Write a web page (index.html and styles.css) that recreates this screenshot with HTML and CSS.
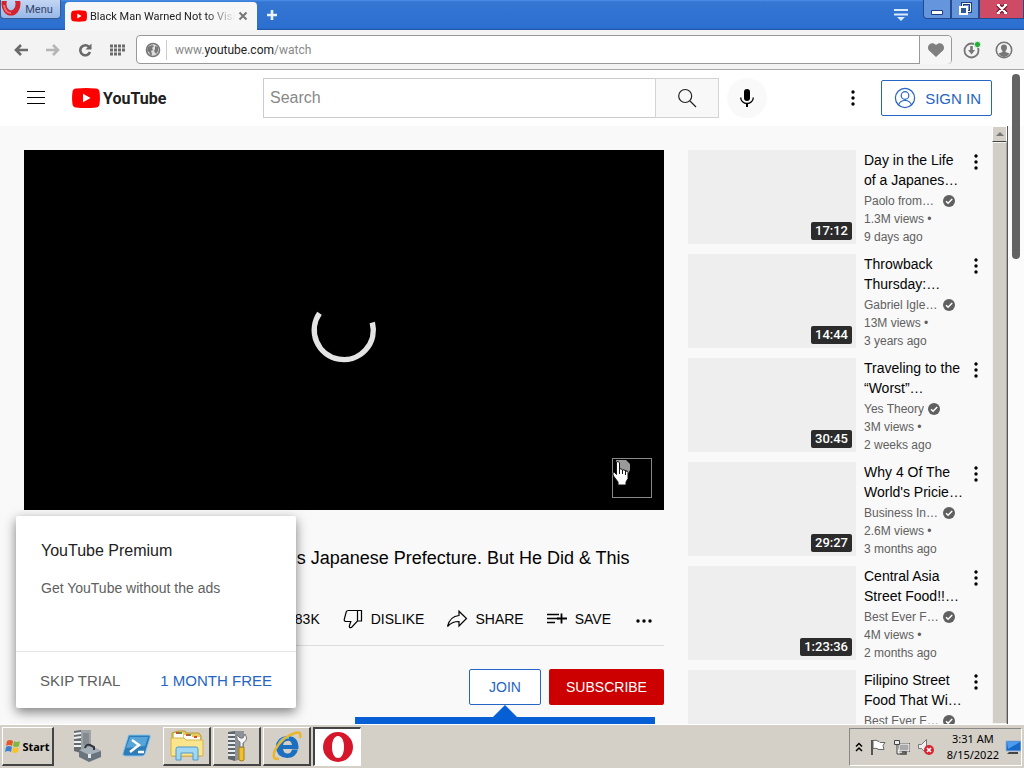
FILE: index.html
```
<!DOCTYPE html>
<html lang="en">
  <head>
    <meta charset="UTF-8">
    <meta name="viewport" content="width=device-width, initial-scale=1">
    <title>YouTube</title>
    <link rel="stylesheet" href="styles.css">
  </head>
  <body>
    <!-- shared icons -->
    <svg class="sprite" aria-hidden="true">
      <symbol id="dots" viewBox="0 0 24 24">
        <circle cx="12" cy="6" r="1.700"/><circle cx="12" cy="12" r="1.700"/><circle cx="12" cy="18" r="1.700"/>
      </symbol>
      <symbol id="check" viewBox="0 0 12 12">
        <circle cx="6" cy="6" r="6" fill="#606060"/>
        <path d="M3 6.200l2.100 2.100L9.200 4" fill="none" stroke="#fff" stroke-width="1.500"/>
      </symbol>
      <symbol id="play" viewBox="0 0 28 20">
        <path d="M4 .6Q14-.4 24 .6q3 .2 3.500 3.200.9 6.200 0 12.400-.5 3-3.500 3.200-10 1-20 0-3-.2-3.500-3.200-.9-6.200 0-12.400Q1 .8 4 .6z" fill="#f00"/>
        <path d="M11 5.700v8.600l7.500-4.300z" fill="#fff"/>
      </symbol>
    </svg>

    <header class="titlebar">
      <button class="opera-menu">
        <svg width="24" height="17" viewBox="0 0 24 17"><ellipse cx="11" cy="3" rx="7" ry="9" fill="none" stroke="#d3232f" stroke-width="5"/><path d="M4 4q1 8 7 8" fill="none" stroke="#f16a70" stroke-width="2"/></svg>
        Menu
      </button>
      <div class="tab">
        <svg width="16" height="12"><use href="#play"/></svg>
        <span class="tab-title">Black Man Warned Not to Visit</span>
        <button class="tab-close" aria-label="Close tab"><svg width="10" height="10" viewBox="0 0 10 10"><path d="M1.500 1.500l7 7m0-7l-7 7" stroke="#777" stroke-width="2"/></svg></button>
      </div>
      <button class="new-tab" aria-label="New tab"><svg width="12" height="12" viewBox="0 0 12 12"><path d="M6 1v10M1 6h10" stroke="#e9f2ff" stroke-width="2.600"/></svg></button>
      <div class="window-buttons">
        <button class="tab-menu" aria-label="Tab menu"><svg width="14" height="14" viewBox="0 0 14 14"><path d="M0 2h14M0 6.500h14" stroke="#dceaff" stroke-width="2"/><path d="M3 9h8l-4 4z" fill="#dceaff"/></svg></button>
        <button class="win" aria-label="Minimize"><svg width="14" height="14" viewBox="0 0 14 14"><path d="M1.500 8.500h11v4h-11z" fill="#fff" stroke="#1b3f80"/></svg></button>
        <button class="win" aria-label="Restore"><svg width="14" height="14" viewBox="0 0 14 14"><path d="M4.500 1.500h8v8h-8z" fill="none" stroke="#1b3f80" stroke-width="3"/><path d="M4.500 1.500h8v8h-8z" fill="none" stroke="#fff"/><path d="M2 5h7v7H2z" fill="#31569b" stroke="#fff" stroke-width="2"/></svg></button>
        <button class="win win-close" aria-label="Close"><svg width="14" height="14" viewBox="0 0 14 14"><path d="M3 3l8 8m0-8l-8 8" stroke="#6b1320" stroke-width="4.500"/><path d="M3 3l8 8m0-8l-8 8M2 3h3m4 0h3M2 11h3m4 0h3" stroke="#fff" stroke-width="2.200"/></svg></button>
      </div>
    </header>

    <nav class="toolbar">
      <button aria-label="Back"><svg width="14" height="14" viewBox="0 0 14 14" fill="none" stroke="#6a6a6a" stroke-width="2.600"><path d="M14 7H2M7 2L2 7l5 5"/></svg></button>
      <button aria-label="Forward"><svg width="14" height="14" viewBox="0 0 14 14" fill="none" stroke="#b5b5b5" stroke-width="2.600"><path d="M0 7h12M7 2l5 5-5 5"/></svg></button>
      <button aria-label="Reload"><svg width="14" height="14" viewBox="0 0 14 14"><path d="M11 3.800A5 5 0 1 0 12 9" fill="none" stroke="#6a6a6a" stroke-width="2.600"/><path d="M13.500.5v6h-6z" fill="#6a6a6a"/></svg></button>
      <button aria-label="Speed Dial"><svg width="15" height="12" viewBox="0 0 15 12"><path d="M0 2h15M0 6h15M0 10h11" stroke="#6a6a6a" stroke-width="3" stroke-dasharray="3 1"/></svg></button>
      <div class="address">
        <svg class="globe" width="16" height="16" viewBox="0 0 16 16"><circle cx="8" cy="8" r="6.500" fill="#ddd" stroke="#777" stroke-width="1.600"/><path d="M3 5l4-2 2 1-2 2 1 2-2 1 1 3-1 2-2-4-2-1zM10 4l3 1v4l-2 3-2-3 1-2z" fill="#777"/></svg>
        <span class="url">www.<b>youtube.com</b>/watch</span>
        <button class="heart" aria-label="Bookmark"><svg width="18" height="16" viewBox="0 0 18 16"><path d="M9 15L2 8.500C-1.500 4 4.500-1.500 9 3c4.500-4.500 10.500 1 7 5.500z" fill="#808080"/></svg></button>
      </div>
      <button aria-label="Downloads"><svg width="18" height="18" viewBox="0 0 18 18"><circle cx="8.500" cy="9.500" r="7" fill="none" stroke="#777" stroke-width="1.800"/><path d="M8.500 5v5" stroke="#777" stroke-width="2.600"/><path d="M5 9h7l-3.500 4.500z" fill="#777"/><circle cx="14.500" cy="3.500" r="3.200" fill="#21b135" stroke="#f3f3f3"/></svg></button>
      <button aria-label="Profile"><svg width="18" height="18" viewBox="0 0 18 18"><circle cx="9" cy="9" r="7.700" fill="none" stroke="#777" stroke-width="1.600"/><path d="M9 3.500c4 0 3.500 5 1.500 6.500v1l4 1.500Q12 16 9 16t-5.500-3.500l4-1.500v-1C5.500 8.500 5 3.500 9 3.500z" fill="#777"/></svg></button>
    </nav>

    <div class="page">
      <div class="viewport">
        <header class="masthead">
          <div class="masthead-start">
            <button aria-label="Guide"><svg width="24" height="24" viewBox="0 0 24 24"><path d="M3 5.500h18M3 11.500h18M3 17.500h18" stroke="#030303"/></svg></button>
            <a class="logo" href="#"><svg width="28" height="20"><use href="#play"/></svg><span>YouTube</span></a>
          </div>
          <form class="search">
            <input type="text" placeholder="Search" aria-label="Search">
            <button type="button" aria-label="Search"><svg width="24" height="24" viewBox="0 0 24 24" fill="none" stroke="#222" stroke-width="1.200"><circle cx="10.200" cy="10" r="6.500"/><path d="M15 15l6 6"/></svg></button>
          </form>
          <button class="mic" aria-label="Search with your voice"><svg width="24" height="24" viewBox="0 0 24 24"><rect x="9" y="3" width="6" height="12" rx="3"/><path d="M5.700 11.500a6.300 6 0 0 0 12.600 0" fill="none" stroke="#000" stroke-width="1.300"/><path d="M11 17h2v4h-2z"/></svg></button>
          <div class="masthead-end">
            <button aria-label="Settings"><svg width="24" height="24"><use href="#dots"/></svg></button>
            <button class="outline sign-in">
              <svg width="24" height="24" viewBox="0 0 24 24" fill="none" stroke="#2565c3" stroke-width="1.200"><circle cx="12" cy="12" r="9.600"/><circle cx="12" cy="9.500" r="3.800"/><path d="M5.500 19c1-3 3.500-4.500 6.500-4.500s5.500 1.500 6.500 4.500"/></svg>
              SIGN IN
            </button>
          </div>
        </header>

        <div class="scroller">
          <main class="watch">
            <section class="primary">
              <div class="player">
                <svg class="spinner" width="68" height="68" viewBox="0 0 68 68"><path d="M9.500 17.300A29.500 29.500 0 1 0 62.300 26.500" fill="none" stroke="#e4e4e4" stroke-width="5.500"/></svg>
                <div class="preview">
                  <svg width="38" height="38" viewBox="0 0 38 38"><path d="M3 1h10l4 4v6l-2 4-2-4H4z" fill="#999"/></svg>
                </div>
                <svg class="pointer" width="18" height="26" viewBox="0 0 18 26"><path d="M4.500 2q2-1.500 3 1v6q1.500-1 3 1 1.500-1 3 1 2-.5 2.500 1.500v6l-2 3.500v3H6v-3l-4.500-6q-1.500-4 1-3.500l2 2z" fill="#fff" stroke="#111"/><path d="M7.500 9v5m3-4v4m3-3v4" stroke="#111"/></svg>
              </div>
              <h1 class="title">Black Man Warned Not to Visit This Japanese Prefecture. But He Did &amp; This</h1>
              <div class="actions">
                <button>83K</button>
                <button><svg width="24" height="24" viewBox="0 0 24 24" fill="none" stroke="#030303" stroke-width="1.200"><path d="M16.500 3.500V14l-6 6.500c-2 .5-2.500-.5-2-2l1.300-4H4.500q-1.500-.5-1.300-2l2-7.500q.5-1.500 2-1.500H20.500V14h-4"/></svg>DISLIKE</button>
                <button><svg width="24" height="24" viewBox="0 0 24 24" fill="none" stroke="#030303" stroke-width="1.200"><path d="M14 4.200l7.500 7.300L14 19v-4.500c-5.500 0-8.500 1.500-11.500 5C4 13 8 9 14 8.500z"/></svg>SHARE</button>
                <button><svg width="24" height="24" viewBox="0 0 24 24" stroke="#030303"><path d="M2 7.500h12M2 11.500h12M2 15.500h8" stroke-width="1.300"/><path d="M16.500 6.500v10M12 11.500h10" stroke-width="1.800"/></svg>SAVE</button>
                <button aria-label="More actions"><svg width="24" height="24" viewBox="0 0 24 24"><circle cx="6" cy="14" r="1.700"/><circle cx="12" cy="14" r="1.700"/><circle cx="18" cy="14" r="1.700"/></svg></button>
              </div>
              <div class="owner">
                <div class="join">
                  <button class="outline">JOIN</button>
                  <div class="tip"></div>
                </div>
                <button class="subscribe">SUBSCRIBE</button>
              </div>
            </section>

            <aside class="related">
              <article class="video">
                <div class="thumb"><span>17:12</span></div>
                <div class="meta">
                  <h3>Day in the Life of a Japanes…</h3>
                  <p class="channel"><span>Paolo fromTOKYO</span><svg width="12" height="12"><use href="#check"/></svg></p>
                  <p>1.3M views •</p>
                  <p>9 days ago</p>
                </div>
                <button aria-label="Action menu"><svg width="24" height="24"><use href="#dots"/></svg></button>
              </article>
              <article class="video">
                <div class="thumb"><span>14:44</span></div>
                <div class="meta">
                  <h3>Throwback Thursday:…</h3>
                  <p class="channel"><span>Gabriel Iglesias</span><svg width="12" height="12"><use href="#check"/></svg></p>
                  <p>13M views •</p>
                  <p>3 years ago</p>
                </div>
                <button aria-label="Action menu"><svg width="24" height="24"><use href="#dots"/></svg></button>
              </article>
              <article class="video">
                <div class="thumb"><span>30:45</span></div>
                <div class="meta">
                  <h3>Traveling to the “Worst”…</h3>
                  <p class="channel"><span>Yes Theory</span><svg width="12" height="12"><use href="#check"/></svg></p>
                  <p>3M views •</p>
                  <p>2 weeks ago</p>
                </div>
                <button aria-label="Action menu"><svg width="24" height="24"><use href="#dots"/></svg></button>
              </article>
              <article class="video">
                <div class="thumb"><span>29:27</span></div>
                <div class="meta">
                  <h3>Why 4 Of The World's Pricie…</h3>
                  <p class="channel"><span>Business Insider</span><svg width="12" height="12"><use href="#check"/></svg></p>
                  <p>2.6M views •</p>
                  <p>3 months ago</p>
                </div>
                <button aria-label="Action menu"><svg width="24" height="24"><use href="#dots"/></svg></button>
              </article>
              <article class="video">
                <div class="thumb"><span>1:23:36</span></div>
                <div class="meta">
                  <h3>Central Asia Street Food!!…</h3>
                  <p class="channel"><span>Best Ever Food</span><svg width="12" height="12"><use href="#check"/></svg></p>
                  <p>4M views •</p>
                  <p>2 months ago</p>
                </div>
                <button aria-label="Action menu"><svg width="24" height="24"><use href="#dots"/></svg></button>
              </article>
              <article class="video">
                <div class="thumb"></div>
                <div class="meta">
                  <h3>Filipino Street Food That Wi…</h3>
                  <p class="channel"><span>Best Ever Food</span><svg width="12" height="12"><use href="#check"/></svg></p>
                </div>
                <button aria-label="Action menu"><svg width="24" height="24"><use href="#dots"/></svg></button>
              </article>
            </aside>
          </main>
          <div class="scrollbar">
            <button class="scroll-up" aria-label="Scroll up"><svg width="8" height="4" viewBox="0 0 8 4"><path d="M0 4l4-4 4 4z" fill="#777"/></svg></button>
            <div class="scroll-thumb"></div>
          </div>
        </div>
      </div>
      <div class="gutter"><div class="gutter-thumb"></div></div>

      <section class="promo">
        <div class="promo-text">
          <h2>YouTube Premium</h2>
          <p>Get YouTube without the ads</p>
        </div>
        <div class="promo-buttons">
          <button>SKIP TRIAL</button>
          <button class="accept">1 MONTH FREE</button>
        </div>
      </section>
    </div>

    <footer class="taskbar">
      <button class="task start"><svg width="16" height="16" viewBox="0 0 16 16"><path d="M2 3q3-2 6 0L7 8Q4 6 1 8z" fill="#e4572b"/><path d="M9 3q3 2 6 0l-1 5q-3 2-6 0z" fill="#7fb93c"/><path d="M1 9q3-2 6 0l-1 5q-3-2-6 0z" fill="#3b7fd1"/><path d="M8 9q3 2 6 0l-1 5q-3 2-6 0z" fill="#f8c22d"/></svg>Start</button>
      <div class="tasks">
        <button class="task flat" aria-label="Server Manager"><svg width="32" height="32" viewBox="0 0 32 32"><path d="M3 1l7-1v23l-7-2z" fill="#646b70"/><path d="M3 4l7-1M3 8l7-1M3 12h7M3 16h7" stroke="#edf1f3" stroke-width="2"/><path d="M10 0h10v18l-10 5z" fill="#9da3a6"/><path d="M12 3h6v12h-6z" fill="#858b8f"/><path d="M8 20l12-4 10 5v6l-12 5-10-5z" fill="#68747e"/><path d="M8 20l12-4 10 5-12 4z" fill="#a5b0b9"/><path d="M14 18q1-4 5-3l4 2v3" fill="none" stroke="#30363b" stroke-width="2"/><path d="M17 24h3v4h-3z" fill="#e5e7e8"/></svg></button>
        <button class="task flat" aria-label="PowerShell"><svg width="32" height="32" viewBox="0 0 32 32"><path d="M8 5h20q2 0 1 3l-5 16q-1 2-3 2H4q-3 0-2-3L7 7q0-2 1-2z" fill="#2d7cb7" stroke="#8ac7ec"/><path d="M9 7h18l-3 9-19 2z" fill="#57a4d8"/><path d="M11 10l7 5-9 7M17 22h6" fill="none" stroke="#fff" stroke-width="2.500"/></svg></button>
        <button class="task" aria-label="Explorer"><svg width="34" height="34" viewBox="0 0 34 34"><path d="M2 4l6-2h7l1 2h13l2 3v20H2z" fill="#e9c85d" stroke="#b99a37"/><path d="M4 4h9v6H4zM14 6h8v5h-8zM22 8h8v4h-8z" fill="#fff"/><path d="M6 4h3M16 6h3M24 8h3" stroke="#d34b2c" stroke-width="2"/><path d="M9 4h3M19 6h2" stroke="#3b9a55" stroke-width="2"/><path d="M1 9h13l2 2h17v16H1z" fill="#fae48c" stroke="#d4b34a"/><path d="M6 31V20q0-2 2-2h18q2 0 2 2v11h-5v-7H11v7z" fill="#9fd7f5" stroke="#4f9bc6"/></svg></button>
        <button class="task" aria-label="Server tools"><svg width="32" height="32" viewBox="0 0 32 32"><path d="M7 2l7-1v30l-7-2z" fill="#5f666b"/><path d="M7 5h7M7 9h7M7 13h7M7 17h7M7 21h7M7 25h7" stroke="#e8ecee" stroke-width="2"/><path d="M14 1h9v27l-9 3z" fill="#8c9297"/><path d="M18 17h5v13q-2 2-5 0z" fill="#f0c02e" stroke="#a47c14"/><path d="M19 17v-5q-4-2-3-7l3 3h3l2-4q4 6-2 9v4z" fill="#f2f4f5" stroke="#777"/></svg></button>
        <button class="task" aria-label="Internet Explorer"><svg width="32" height="32" viewBox="0 0 32 32"><path d="M27 19.500Q25 28 16 28 5 27 5 17T16 6q12 0 11.500 13H12q1 5 5 4.500 3 0 4-4z" fill="#1b6fc0"/><path d="M12 15h9q-1-5-5-4-3 0-4 4z" fill="#d4d0c8"/><path d="M8 13q3-6 10-5" fill="none" stroke="#63b9ef" stroke-width="2"/><path d="M8 29Q0 30 4 20 11 7 24 3q7-2 5 5" fill="none" stroke="#eab62d" stroke-width="2.500"/></svg></button>
        <button class="task active" aria-label="Opera"><svg width="32" height="32" viewBox="0 0 32 32"><path d="M16 1a15 15 0 1 0 0 30 15 15 0 1 0 0-30zm0 4c4 0 6 5 6 11s-2 11-6 11-6-5-6-11 2-11 6-11z" fill="#d5162b" fill-rule="evenodd"/></svg></button>
      </div>
      <div class="tray">
        <svg width="8" height="10" viewBox="0 0 8 10"><path d="M1 4.500L4 1.500l3 3M1 9l3-3 3 3" fill="none" stroke="#000" stroke-width="1.500"/></svg>
        <svg width="18" height="18" viewBox="0 0 18 18"><path d="M3 2v15" stroke="#555" stroke-width="2"/><path d="M4 2.500q3-1 6 1l1 1h5l-2 3 1 4h-5q-3-2-6-1z" fill="#fff" stroke="#666"/></svg>
        <svg width="18" height="18" viewBox="0 0 18 18"><path d="M5.500 5.500h11v8h-11z" fill="#aaa" stroke="#444"/><path d="M6 6h10v7H6z" fill="none" stroke="#fff"/><path d="M9 14h4v2H7" fill="none" stroke="#444" stroke-width="1.500"/><path d="M1.500 2.500h5v4h-5zM4 6v10h3" fill="#eee" stroke="#444"/></svg>
        <svg width="18" height="18" viewBox="0 0 18 18"><path d="M1.500 6.500h3l5-5v14l-5-5h-3z" fill="#eee" stroke="#777"/><circle cx="12" cy="12" r="5" fill="#d72332"/><path d="M10 10l4 4m0-4l-4 4" stroke="#fff" stroke-width="1.600"/></svg>
        <div class="clock">3:31 AM<br>8/15/2022</div>
        <svg width="16" height="16" viewBox="0 0 16 16"><path d="M1 2h15v10H1z" fill="#1769c8" stroke="#9ab6d8"/><path d="M2 3h13L3 10z" fill="#4e9ced"/><path d="M4 13h9v2H2z" fill="#444"/></svg>
      </div>
    </footer>
  </body>
</html>
```
FILE: styles.css
```
* {
  box-sizing: border-box;
}

body {
  display: flex;
  flex-direction: column;
  height: 100vh;
  margin: 0;
  overflow: hidden;
  font-family: "Liberation Sans", Arial, sans-serif;
  font-size: 14px;
  color: #030303;
  background: #f9f9f9;
}

h1, h2, h3, p {
  margin: 0;
  font-weight: normal;
}

button {
  display: flex;
  align-items: center;
  justify-content: center;
  flex-shrink: 0;
  margin: 0;
  padding: 0;
  border: 0;
  background: none;
  font: inherit;
  color: inherit;
  cursor: pointer;
}

svg {
  display: block;
  flex-shrink: 0;
}

.sprite {
  position: absolute;
  width: 0;
  height: 0;
}

/* browser window */
.titlebar {
  display: flex;
  flex-shrink: 0;
  height: 30px;
  background: linear-gradient(#4a90e8 0, #3576d2 2px, #2b6fd0 28px, #1f4f9c 30px);
  font-family: Roboto, sans-serif;
}

.opera-menu {
  width: 61px;
  height: 19px;
  padding-right: 8px;
  gap: 1px;
  border: 1px solid #39598f;
  border-top: 0;
  border-radius: 0 0 4px 4px;
  background: linear-gradient(#c3d6f3, #98b8e8);
  font-size: 11px;
  color: #34456a;
}

.tab {
  display: flex;
  align-items: center;
  width: 192px;
  height: 28px;
  margin: 2px 0 0 4px;
  padding: 0 9px 0 6px;
  gap: 3px;
  border-radius: 4px 4px 0 0;
  background: #f7f7f7;
  font-size: 11px;
}

.tab-title {
  flex: 1;
  overflow: hidden;
  white-space: nowrap;
  color: #222;
  -webkit-mask-image: linear-gradient(to right, #000 80%, transparent);
  mask-image: linear-gradient(to right, #000 80%, transparent);
}

.new-tab {
  width: 30px;
}

.window-buttons {
  display: flex;
  align-items: flex-start;
  margin-left: auto;
}

.tab-menu {
  width: 30px;
  height: 30px;
  margin-right: 7px;
}

.win {
  width: 28px;
  height: 19px;
  border: 1px solid #24498c;
  border-top: 0;
  background: #6596dd;
}

.win:nth-child(2) {
  border-radius: 0 0 0 4px;
}

.win-close {
  width: 45px;
  background: #cf4a65;
}

.toolbar {
  display: flex;
  align-items: center;
  flex-shrink: 0;
  height: 40px;
  padding: 0 4px 0 5px;
  border-bottom: 1px solid #a8a8a8;
  background: #f3f3f3;
  font-family: Roboto, sans-serif;
}

.toolbar button {
  width: 32px;
  height: 28px;
}

.address {
  display: flex;
  flex: 1;
  align-items: center;
  height: 29px;
  margin: 0 4px 0 3px;
  border: 1px solid #999;
  border-radius: 4px;
  background: #fff;
}

.globe {
  margin: 0 5px 0 8px;
}

.url {
  flex: 1;
  padding-left: 8px;
  border-left: 1px solid #ccc;
  font-size: 12px;
  line-height: 20px;
  color: #888;
}

.url b {
  font-weight: normal;
  color: #222;
}

.toolbar .heart {
  border-left: 1px solid #999;
  border-radius: 0 4px 4px 0;
  background: #f6f6f6;
}

/* page */
.page {
  position: relative;
  display: flex;
  flex: 1;
  min-height: 0;
}

.viewport {
  display: flex;
  flex: 1;
  flex-direction: column;
  min-width: 0;
}

.gutter {
  width: 16px;
  padding: 4px;
  background: linear-gradient(#fff 56px, #fbfbfb 56px);
}

.gutter-thumb {
  height: 185px;
  border-radius: 4px;
  background: #636363;
}

.masthead {
  display: flex;
  flex-shrink: 0;
  align-items: center;
  height: 56px;
  padding-right: 16px;
  background: #fff;
}

.masthead-start {
  display: flex;
  align-items: center;
  width: 263px;
  padding-left: 24px;
  gap: 24px;
}

.logo {
  display: flex;
  align-items: center;
  gap: 3px;
  color: #212121;
  font-family: Roboto, sans-serif;
  font-size: 16px;
  font-weight: bold;
  text-decoration: none;
}

.search {
  display: flex;
  flex: 1;
  height: 40px;
}

.search input {
  flex: 1;
  min-width: 0;
  padding: 0 6px;
  border: 1px solid #ccc;
  border-right: 0;
  background: #fff;
  font: 16px "Liberation Sans", Arial, sans-serif;
}

.search input::placeholder {
  color: #888;
}

.search button {
  width: 64px;
  border: 1px solid #d3d3d3;
  background: #f8f8f8;
}

.mic {
  width: 40px;
  height: 40px;
  margin-left: 8px;
  border-radius: 50%;
  background: #f9f9f9;
}

.masthead-end {
  display: flex;
  justify-content: flex-end;
  align-items: center;
  width: 225px;
  gap: 16px;
}

.outline {
  height: 36px;
  border: 1px solid #2565c3;
  border-radius: 2px;
  background: #fff;
  color: #2565c3;
}

.sign-in {
  padding: 0 10px 0 11px;
  gap: 8px;
  font-size: 15px;
}

.scroller {
  display: flex;
  flex: 1;
  min-height: 0;
}

.watch {
  display: flex;
  flex: 1;
  gap: 24px;
  min-width: 0;
  padding: 24px 4px 0 24px;
  overflow: hidden;
}

.primary {
  flex: 1;
  min-width: 0;
}

.player {
  position: relative;
  display: flex;
  align-items: center;
  justify-content: center;
  aspect-ratio: 16 / 9;
  background: #000;
}

.preview {
  position: absolute;
  right: 12px;
  bottom: 12px;
  width: 40px;
  height: 40px;
  border: 1px solid #888;
}

.pointer {
  position: absolute;
  right: 34px;
  bottom: 24px;
}

.title {
  padding: 36px 0 0;
  font-size: 18px;
  line-height: 24px;
  white-space: nowrap;
}

.actions {
  display: flex;
  justify-content: flex-end;
  align-items: center;
  height: 76px;
  padding: 22px 8px 0 0;
  gap: 21px;
  border-bottom: 1px solid #ddd;
}

.actions button {
  gap: 6px;
}

.owner {
  display: flex;
  justify-content: flex-end;
  gap: 8px;
  padding-top: 23px;
}

.join {
  position: relative;
}

.join .outline {
  width: 72px;
}

.tip {
  position: absolute;
  top: 48px;
  left: -114px;
  width: 300px;
  height: 60px;
  background: #065fd4;
}

.tip::before {
  content: "";
  position: absolute;
  top: -12px;
  left: 138px;
  border: 12px solid transparent;
  border-top: 0;
  border-bottom-color: #065fd4;
}

.subscribe {
  width: 115px;
  height: 36px;
  border-radius: 2px;
  background: #c00;
  color: #fff;
}

.related {
  flex-shrink: 0;
  width: 300px;
}

.video {
  display: flex;
  align-items: flex-start;
  height: 96px;
  margin-bottom: 8px;
}

.thumb {
  display: flex;
  align-items: flex-end;
  justify-content: flex-end;
  flex-shrink: 0;
  width: 168px;
  height: 94px;
  margin-right: 8px;
  padding: 4px;
  background: #eee;
}

.thumb span {
  padding: 0 4px;
  border-radius: 2px;
  background: #2b2b2b;
  color: #fff;
  font-family: Roboto, sans-serif;
  font-size: 13px;
  font-weight: 500;
  line-height: 18px;
}

.meta {
  flex: 1;
  min-width: 0;
  font-size: 12px;
  line-height: 18px;
  color: #606060;
}

.meta h3 {
  margin-bottom: 2px;
  font-size: 14px;
  line-height: 20px;
  color: #030303;
}

.channel {
  display: flex;
  align-items: center;
  gap: 4px;
}

.channel span {
  max-width: 75px;
  overflow: hidden;
  text-overflow: ellipsis;
  white-space: nowrap;
}

.scrollbar {
  display: flex;
  flex-direction: column;
  width: 16px;
  border-right: 1px solid #555;
  background: #d0cec6;
}

.scroll-up {
  height: 16px;
  border: 1px solid #fff;
  border-bottom-color: #444;
  background: #d4d0c8;
}

.scroll-thumb {
  flex: 1;
  border: 1px solid #f4f2ee;
  border-right-color: #aaa69e;
  background: #d0cec6;
}

/* premium popup */
.promo {
  position: absolute;
  left: 16px;
  bottom: 16px;
  width: 280px;
  border-radius: 2px;
  background: #fff;
  box-shadow: 0 4px 12px rgba(0, 0, 0, 0.5);
}

.promo-text {
  height: 135px;
  padding: 25px;
}

.promo h2 {
  margin-bottom: 17px;
  font-size: 16px;
  line-height: 20px;
  color: #222;
}

.promo p {
  line-height: 20px;
  color: #606060;
}

.promo-buttons {
  display: flex;
  justify-content: space-between;
  height: 57px;
  padding: 0 24px;
  border-top: 1px solid #e5e5e5;
  font-size: 15px;
  color: #606060;
}

.promo .accept {
  color: #2565c3;
}

/* desktop taskbar */
.taskbar {
  position: relative;
  display: flex;
  align-items: center;
  flex-shrink: 0;
  height: 44px;
  padding: 0 2px;
  border-top: 1px solid #fff;
  background: #d4d0c8;
  font-family: "Noto Sans", sans-serif;
  font-size: 11px;
  color: #000;
}

.task {
  width: 48px;
  height: 39px;
  border: 1px solid #fff;
  border-right: 2px solid #444;
  border-bottom: 2px solid #444;
}

.start {
  width: 52px;
  gap: 1px;
  font-weight: bold;
}

.tasks {
  display: flex;
  gap: 2px;
  margin-left: 9px;
}

.flat {
  border-color: transparent;
}

.active {
  border: 2px solid #444;
  border-right: 1px solid #fff;
  border-bottom: 1px solid #fff;
  background: #fff;
}

.tray {
  display: flex;
  align-items: center;
  height: 38px;
  margin-left: auto;
  padding-left: 5px;
  gap: 6px;
  border: 1px solid #888;
  border-right-color: #fff;
  border-bottom-color: #fff;
}

.clock {
  padding-left: 6px;
  line-height: 16px;
  text-align: center;
}
```
